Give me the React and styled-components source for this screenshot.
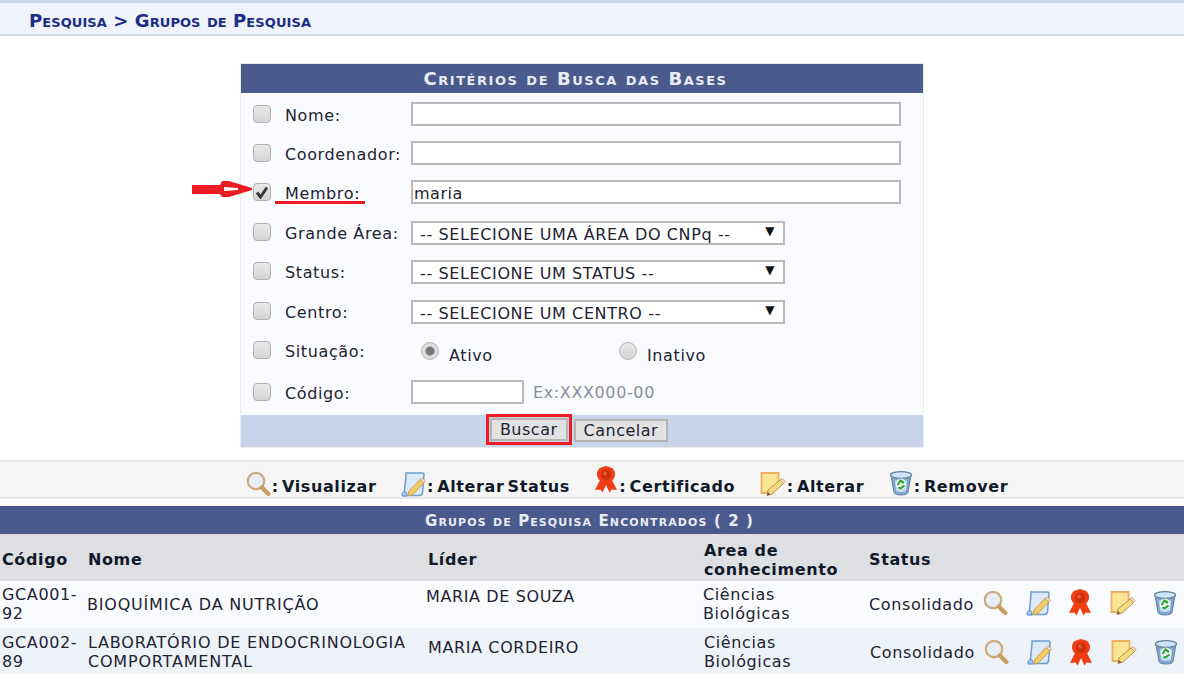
import React from 'react';
import styled, { createGlobalStyle } from 'styled-components';

const colors = {
  navy: '#4a5a8c',
  navyText: '#1b2d84',
  light: '#c8d4ea',
  text: '#222233',
};

const GlobalStyle = createGlobalStyle`
  html, body { margin: 0; padding: 0; background: #fff; }
  body { font-family: "DejaVu Sans", Verdana, sans-serif; color: ${colors.text}; }
`;

function Magnifier() {
  return (
    <svg width="25" height="26" viewBox="0 0 25 26">
      <circle cx="10" cy="10" r="8.2" fill="#e6eff8" stroke="#cfa877" strokeWidth="2.2" />
      <path d="M15.8 16.4 L22.4 23" stroke="#c99c60" strokeWidth="4.2" strokeLinecap="round" />
    </svg>
  );
}

function DocPencil() {
  return (
    <svg width="25" height="26" viewBox="0 0 25 26">
      <path d="M5 2 H21.5 Q23 2 23 4 L21.5 22 Q21 24.5 18.5 24.5 H3 L5 5 Z" fill="#dbe9f8" stroke="#6f9dd0" strokeWidth="1.5" />
      <path d="M1 25 Q0.5 20.5 4 20.5 Q6.5 21 6 25 Z" fill="#a8c6e8" stroke="#5f8fc8" strokeWidth="1" />
      <path d="M8 20 L19 8.5 L23 12 L12 23.5 L7 25 Z" fill="#f2cc68" stroke="#c99c50" strokeWidth="1" />
      <path d="M19 8.5 L23 12 L24.5 10 L21 7 Z" fill="#f0e6d0" stroke="#c99c50" strokeWidth="0.8" />
    </svg>
  );
}

function Ribbon() {
  return (
    <svg width="24" height="27" viewBox="0 0 24 27">
      <path d="M7 12 L1 24 L6.5 23.5 L8.5 26.5 L12 19 L15.5 26.5 L17.5 23.5 L23 24 L17 12 Z" fill="#f03c10" />
      <path d="M12 0 L15.5 1 L19 2.5 L20.8 6 L21 9.5 L19.5 13 L16 16.5 L12 17.5 L8 16.5 L4.5 13 L3 9.5 L3.2 6 L5 2.5 L8.5 1 Z" fill="#ee3e14" />
      <circle cx="12" cy="8.8" r="5.2" fill="#cc300c" />
      <circle cx="11" cy="7.6" r="2" fill="#e85a30" />
    </svg>
  );
}

function NotePencil() {
  return (
    <svg width="26" height="26" viewBox="0 0 26 26">
      <path d="M1.5 2 H18.5 V13 L11 22 H1.5 Z" fill="#fbe696" stroke="#eeb060" strokeWidth="1.8" />
      <path d="M8 19 L20 9 L23.5 12.5 L12 23 L7 24.5 Z" fill="#f6dc80" stroke="#b89048" strokeWidth="1" />
      <path d="M20 9 L23.5 12.5 L25 10.5 L22 7.5 Z" fill="#f0e6d0" stroke="#b89048" strokeWidth="0.8" />
      <path d="M7 24.5 L8 21 L10.5 23.5 Z" fill="#7a5a30" />
    </svg>
  );
}

function Bin() {
  return (
    <svg width="24" height="26" viewBox="0 0 24 26">
      <path d="M2 5 L5 22.5 Q6 25 12 25 Q18 25 19 22.5 L22 5 Z" fill="#7fa6d0" stroke="#64809c" strokeWidth="1" />
      <ellipse cx="12" cy="5" rx="10.5" ry="3.4" fill="#cfe4f6" stroke="#64809c" strokeWidth="1.2" />
      <path d="M6 9 Q12 22 18 9 L17 21 Q12 23 7 21 Z" fill="#c5dcf0" />
      <circle cx="12" cy="14" r="5.4" fill="#f2f8f2" />
      <path d="M8.5 15 L11.5 10.5 L15 13 M15.5 15.5 L12 18.2 H9.5" stroke="#2fa838" strokeWidth="2.2" fill="none" />
    </svg>
  );
}

function HollowArrow() {
  return (
    <svg width="60" height="16" viewBox="0 0 60 16">
      <path
        fillRule="evenodd"
        fill="#ed1c24"
        d="M0 4 H28 L30 0 H37 L60 7 L60 9 L37 16 H30 L28 13 H0 Z M32 6 V10 L46 9 V7 Z"
      />
    </svg>
  );
}

const searchRows = [
  { label: 'Nome:', type: 'text' },
  { label: 'Coordenador:', type: 'text' },
  { label: 'Membro:', type: 'text', value: 'maria', checked: true },
  { label: 'Grande Área:', type: 'select', value: '-- SELECIONE UMA ÁREA DO CNPq --' },
  { label: 'Status:', type: 'select', value: '-- SELECIONE UM STATUS --' },
  { label: 'Centro:', type: 'select', value: '-- SELECIONE UM CENTRO --' },
  { label: 'Situação:', type: 'radio' },
  { label: 'Código:', type: 'code' },
];

const legend = [
  { icon: <Magnifier />, label: 'Visualizar' },
  { icon: <DocPencil />, label: 'Alterar Status' },
  { icon: <Ribbon />, label: 'Certificado', lift: 4 },
  { icon: <NotePencil />, label: 'Alterar' },
  { icon: <Bin />, label: 'Remover', lift: 1 },
];

const groups = [
  {
    code: 'GCA001-92',
    name: 'BIOQUÍMICA DA NUTRIÇÃO',
    leader: 'MARIA DE SOUZA',
    columns: '85px 339px 277px 166px 113px 1fr',
    leaderTop: 6,
    iconLift: 3,
    even: false,
  },
  {
    code: 'GCA002-89',
    name: 'LABORATÓRIO DE ENDOCRINOLOGIA COMPORTAMENTAL',
    leader: 'MARIA CORDEIRO',
    columns: '86px 340px 276px 166px 113px 1fr',
    leaderTop: 8,
    iconLift: 0,
    even: true,
  },
];

function FieldControl({ row }) {
  if (row.type === 'text') return <TextInput type="text" value={row.value || ''} readOnly />;
  if (row.type === 'select') {
    return (
      <SelectBox>
        {row.value}
        <Caret>▼</Caret>
      </SelectBox>
    );
  }
  if (row.type === 'code') {
    return (
      <>
        <CodeInput type="text" value="" readOnly />
        <Hint>Ex:XXX000-00</Hint>
      </>
    );
  }
  return (
    <RadioGroup>
      <RadioItem><Radio on /><RadioText>Ativo</RadioText></RadioItem>
      <RadioItem><Radio /><RadioText>Inativo</RadioText></RadioItem>
    </RadioGroup>
  );
}

export default function App() {
  return (
    <Page>
      <GlobalStyle />
      <Breadcrumb>Pesquisa &gt; Grupos de Pesquisa</Breadcrumb>

      <SearchForm>
        <FormTitle>Critérios de Busca das Bases</FormTitle>
        <FormBody>
          {searchRows.map((row) => (
            <FormRow key={row.label}>
              <CheckBox>
                {row.checked && (
                  <svg width="14" height="13" viewBox="0 0 14 13">
                    <path d="M2 6.5 L5.5 11 L12 1.5" fill="none" stroke="#3c3c3c" strokeWidth="3" />
                  </svg>
                )}
              </CheckBox>
              <FieldLabel>
                {row.label}
                {row.checked && <RedUnderline />}
                {row.checked && <ArrowMark><HollowArrow /></ArrowMark>}
              </FieldLabel>
              <FieldValue>
                <FieldControl row={row} />
              </FieldValue>
            </FormRow>
          ))}
        </FormBody>
        <FormFooter>
          <HighlightBox><Button>Buscar</Button></HighlightBox>
          <Button>Cancelar</Button>
        </FormFooter>
      </SearchForm>

      <LegendBar>
        {legend.map((item) => (
          <LegendItem key={item.label}>
            <LegendIcon $lift={item.lift}>{item.icon}</LegendIcon>
            <span>: {item.label}</span>
          </LegendItem>
        ))}
      </LegendBar>

      <ResultsTitle>Grupos de Pesquisa Encontrados ( 2 )</ResultsTitle>
      <HeadRow>
        <span>Código</span>
        <span>Nome</span>
        <span>Líder</span>
        <span>Area de conhecimento</span>
        <span>Status</span>
      </HeadRow>
      {groups.map((group) => (
        <DataRow key={group.code} $even={group.even} $columns={group.columns}>
          <Cell>{group.code}</Cell>
          <NameCell>{group.name}</NameCell>
          <LeaderCell $top={group.leaderTop}>{group.leader}</LeaderCell>
          <AreaCell>Ciências Biológicas</AreaCell>
          <Cell>Consolidado</Cell>
          <Actions $lift={group.iconLift}>
            <Magnifier />
            <DocPencil />
            <Ribbon />
            <NotePencil />
            <Bin />
          </Actions>
        </DataRow>
      ))}
    </Page>
  );
}

const Page = styled.div`
  width: 1184px;
  height: 674px;
  overflow: hidden;
  font-size: 16px;
  letter-spacing: 0.62px;
  line-height: 19px;
`;

const Breadcrumb = styled.div`
  height: 31px;
  padding-left: 29px;
  border-top: 3px solid ${colors.light};
  border-bottom: 2px solid ${colors.light};
  margin-bottom: 28px;
  background: #eff3fb;
  font-size: 18px;
  font-weight: bold;
  font-variant: small-caps;
  letter-spacing: 0.08px;
  line-height: 36px;
  color: ${colors.navyText};
`;

const SearchForm = styled.div`
  width: 682px;
  margin-left: 241px;
  background: #fafbfe;
  box-shadow: 0 0 0 1px #ececec;
`;

const FormTitle = styled.div`
  height: 29px;
  padding-right: 13px;
  background: ${colors.navy};
  color: #e8ecf6;
  font-size: 18px;
  font-weight: bold;
  font-variant: small-caps;
  letter-spacing: 1.55px;
  line-height: 30px;
  text-align: center;
`;

const FormBody = styled.div`
  display: grid;
  grid-template-rows: repeat(7, 39.4px) 45px;
  padding: 1px 0 0;
`;

const FormRow = styled.div`
  display: grid;
  grid-template-columns: 44px 126px 1fr;
  align-items: center;
`;

const CheckBox = styled.span`
  display: flex;
  align-items: center;
  justify-content: center;
  box-sizing: border-box;
  width: 18px;
  height: 18px;
  margin-left: 12px;
  border: 1px solid #b0b0b0;
  border-radius: 4px;
  background: linear-gradient(#e8e8e8, #d6d6d6);
`;

const FieldLabel = styled.span`
  position: relative;
  padding-top: 3px;
`;

const RedUnderline = styled.i`
  position: absolute;
  left: -10px;
  top: 20px;
  width: 90px;
  height: 3px;
  background: #ed1c24;
`;

const ArrowMark = styled.i`
  position: absolute;
  left: -93px;
  top: 0;
  display: flex;
`;

const FieldValue = styled.div`
  display: flex;
  align-items: center;
`;

const TextInput = styled.input`
  box-sizing: border-box;
  width: 490px;
  height: 24px;
  padding: 2px 1px 0;
  border: 2px solid #b9b9b9;
  background: #fff;
  font: 16px "DejaVu Sans", Verdana, sans-serif;
  letter-spacing: 0.5px;
  color: ${colors.text};
  outline: none;
`;

const CodeInput = styled(TextInput)`
  width: 113px;
`;

const Hint = styled.span`
  margin-left: 9px;
  color: #8a8f98;
`;

const SelectBox = styled.div`
  position: relative;
  box-sizing: border-box;
  width: 374px;
  height: 24px;
  margin-top: 2px;
  padding-left: 7px;
  border: 2px solid #b9b9b9;
  background: #fff;
  line-height: 23px;
`;

const Caret = styled.span`
  position: absolute;
  right: 8px;
  top: -1px;
  font-size: 12px;
  line-height: 18px;
  color: #111;
`;

const RadioGroup = styled.div`
  display: grid;
  grid-template-columns: 198px auto;
  padding: 6px 0 0 10px;
`;

const RadioItem = styled.span`
  display: flex;
  align-items: flex-start;
  gap: 10px;
`;

const RadioText = styled.span`
  line-height: 19px;
  margin-top: 4px;
`;

const Radio = styled.span`
  box-sizing: border-box;
  width: 18px;
  height: 18px;
  border-radius: 50%;
  border: 1px solid #b5b5b5;
  background: ${(props) => (props.on
    ? 'radial-gradient(circle, #777 0 4px, #dcdcdc 5px)'
    : 'linear-gradient(#e8e8e8, #d4d4d4)')};
`;

const FormFooter = styled.div`
  display: flex;
  align-items: center;
  justify-content: center;
  gap: 2px;
  height: 32px;
  background: ${colors.light};
  padding-right: 10px;
`;

const Button = styled.button`
  box-sizing: border-box;
  height: 23px;
  padding: 0 8px;
  border: 2px solid #b4b4b4;
  background: #e2e2e2;
  font: 16px "DejaVu Sans", Verdana, sans-serif;
  letter-spacing: 0.5px;
  color: ${colors.text};
`;

const HighlightBox = styled.span`
  display: flex;
  padding: 1px;
  margin-bottom: 2px;
  border: 3px solid #ed1c24;
`;

const LegendBar = styled.div`
  display: flex;
  justify-content: center;
  gap: 24.5px;
  box-sizing: border-box;
  height: 39px;
  margin-top: 13px;
  padding: 8px 0 0 70px;
  background: #f5f5f5;
  border-top: 2px solid #e6e6e6;
  border-bottom: 2px solid #e6e6e6;
  font-weight: bold;
  color: #111a2a;
`;

const LegendItem = styled.span`
  display: flex;
  align-items: center;
  height: 28px;
  word-spacing: -3px;
  span { padding-top: 5px; margin-left: 1px; }
`;

const LegendIcon = styled.i`
  display: flex;
  margin-bottom: ${(props) => (props.$lift || 0) * 2}px;
`;

const ResultsTitle = styled.div`
  height: 28px;
  margin-top: 7px;
  padding-right: 5px;
  background: ${colors.navy};
  color: #e8ecf6;
  font-size: 15px;
  font-weight: bold;
  font-variant: small-caps;
  letter-spacing: 1.1px;
  line-height: 31px;
  text-align: center;
`;

const HeadRow = styled.div`
  display: grid;
  grid-template-columns: 86px 340px 276px 165px 1fr;
  align-items: center;
  box-sizing: border-box;
  height: 47px;
  padding: 5px 0 0 2px;
  background: #dedfe3;
  font-weight: bold;
  color: #111a2a;
`;

const DataRow = styled.div`
  display: grid;
  grid-template-columns: ${(props) => props.$columns};
  align-items: center;
  box-sizing: border-box;
  height: 47px;
  padding: ${(props) => (props.$even ? '2px' : '0')} 0 0 2px;
  background: ${(props) => (props.$even ? '#eef2f9' : '#fafbfe')};
`;

const Cell = styled.span``;

const NameCell = styled(Cell)`
  letter-spacing: 0.8px;
`;

const LeaderCell = styled(Cell)`
  align-self: start;
  padding-top: ${(props) => props.$top}px;
`;

const AreaCell = styled(Cell)`
  max-width: 110px;
`;

const Actions = styled.div`
  display: flex;
  gap: 17.5px;
  align-items: center;
  margin: 0 0 ${(props) => props.$lift}px 1px;
`;
